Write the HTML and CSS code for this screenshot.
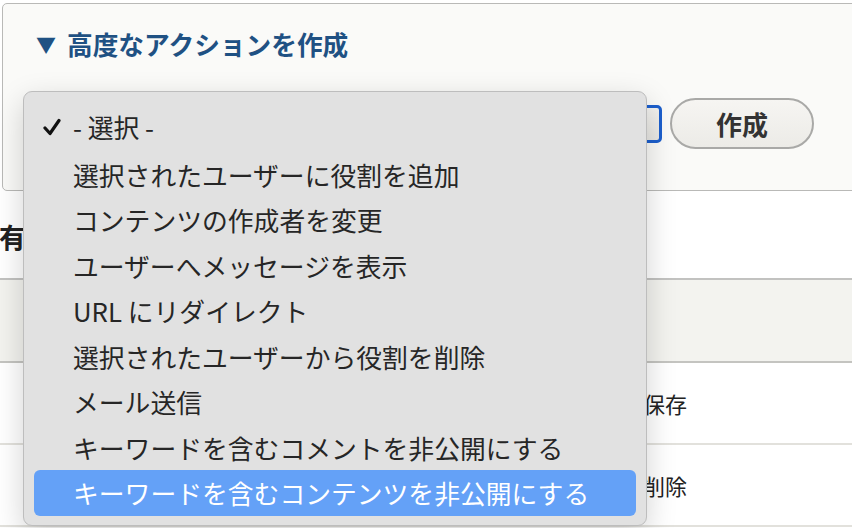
FILE: index.html
```html
<!DOCTYPE html>
<html lang="ja">
  <head>
    <meta charset="UTF-8" />
    <meta name="viewport" content="width=device-width, initial-scale=1.0" />
    <title>アクション</title>
    <link rel="stylesheet" href="styles.css">
  </head>
  <body>
    <section class="advanced">
      <div class="summary"><span class="arrow">▼</span>高度なアクションを作成</div>
      <div class="form_row">
        <div class="select_box"></div>
        <button class="create">作成</button>
      </div>
    </section>

    <h2 class="list_title">有効なアクション</h2>
    <div class="table">
      <div class="row head">
        <div class="cell">アクションの種類</div>
        <div class="cell">ラベル</div>
      </div>
      <div class="row">
        <div class="cell">システム</div>
        <div class="cell">コンテンツを保存</div>
      </div>
      <div class="row">
        <div class="cell">システム</div>
        <div class="cell">コンテンツを削除</div>
      </div>
    </div>

    <!-- 開いているセレクトのメニュー -->
    <ul class="menu">
      <li class="checked">
        <svg class="check" width="18" height="18" viewBox="0 0 18 18">
          <polyline points="2,10 7,15.5 16,2.5" fill="none" stroke="#111" stroke-width="3.2" stroke-linecap="round" stroke-linejoin="round" />
        </svg>- 選択 -
      </li>
      <li>選択されたユーザーに役割を追加</li>
      <li>コンテンツの作成者を変更</li>
      <li>ユーザーへメッセージを表示</li>
      <li>URL にリダイレクト</li>
      <li>選択されたユーザーから役割を削除</li>
      <li>メール送信</li>
      <li>キーワードを含むコメントを非公開にする</li>
      <li class="active">キーワードを含むコンテンツを非公開にする</li>
    </ul>
  </body>
</html>
```

FILE: styles.css
```css
body {
  margin: 0;
  padding: 0;
  background-color: #ffffff;
  font-family: "Noto Sans CJK JP", "Noto Sans", sans-serif;
  color: #222;
  overflow: hidden;
}

.advanced {
  margin: 3px -30px 0 2px;
  padding: 24px 0 41px 33px;
  border: 1px solid #b9b9b7;
  border-radius: 5px;
  background-color: #fafaf8;
}

.summary {
  font-size: 25.7px;
  line-height: 32px;
  font-weight: bold;
  color: #1f5183;
}

.arrow {
  font-size: 20px;
  display: inline-block;
  width: 31px;
  vertical-align: 2px;
}

.form_row {
  display: flex;
  align-items: center;
  gap: 8px;
  margin-top: 37px;
}

.select_box {
  width: 626px;
  height: 38px;
  box-sizing: border-box;
  border: 3px solid #1c5fcd;
  border-radius: 5px;
  background: linear-gradient(#f3f2ef, #e9e8e4);
}

.create {
  width: 144px;
  height: 51px;
  border: 2px solid #a9a9a7;
  border-radius: 26px;
  background: linear-gradient(#f6f5f2, #ecebe7);
  font-family: "Noto Sans CJK JP", sans-serif;
  font-size: 26px;
  font-weight: bold;
  color: #333;
  padding: 0;
}

.list_title {
  margin: 28px 0 23px -1px;
  font-size: 27px;
  line-height: 36px;
  font-weight: bold;
  color: #222;
}

.table {
  border-top: 2px solid #c2c2c0;
}

.row {
  display: grid;
  grid-template-columns: 500px 1fr;
  align-items: center;
  height: 80px;
  border-bottom: 2px solid #e2e1dc;
  background-color: #fff;
  font-size: 22px;
}

.row.head {
  height: 81px;
  background-color: #f3f3ef;
  border-bottom: 2px solid #c4c4c0;
  font-weight: bold;
}

.cell {
  padding: 0 11px;
}

.cell:first-child {
  padding-left: 40px;
}

.menu {
  position: absolute;
  left: 23px;
  top: 91px;
  width: 602px;
  margin: 0;
  padding: 14px 10px 9px;
  list-style: none;
  background-color: #e1e1e1;
  border: 1px solid #bdbdbd;
  border-radius: 9px;
  box-shadow: 0 10px 30px rgba(0, 0, 0, 0.18);
}

.menu li {
  position: relative;
  height: 45.5px;
  line-height: 45.5px;
  padding-left: 39px;
  font-size: 25.8px;
  color: #262626;
  border-radius: 6px;
  white-space: nowrap;
}

.menu li.checked {
  line-height: 42px;
}

.check {
  position: absolute;
  left: 9px;
  top: 12px;
}

.menu li.active {
  background-color: #64a1f7;
  color: #fff;
}
```
